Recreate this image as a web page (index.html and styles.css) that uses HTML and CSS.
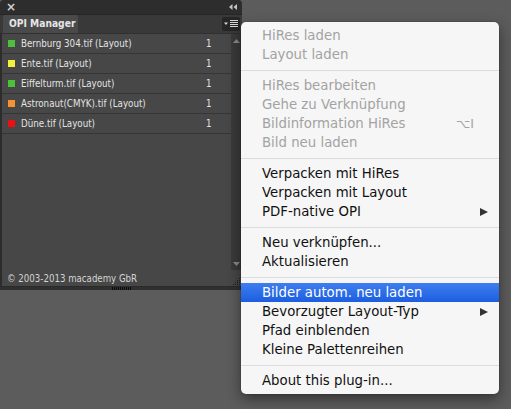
FILE: index.html
```html
<!DOCTYPE html>
<html lang="de">
<head>
<meta charset="utf-8">
<title>OPI Manager</title>
<link rel="stylesheet" href="styles.css">
</head>
<body>
<div class="panel">
  <div class="titlebar">
    <span class="close">×</span>
    <svg class="collapse" width="8" height="6" viewBox="0 0 8 6"><path d="M3.5 0 L0 3 L3.5 6 Z M8 0 L4.5 3 L8 6 Z" fill="#c4c4c4"/></svg>
  </div>
  <div class="tabrow">
    <div class="tab">OPI Manager</div>
    <div class="menubtn">
      <svg width="15" height="8" viewBox="0 0 15 8"><path d="M0 2.5 H4 L2 5 Z" fill="#d8d8d8"/><path d="M6 0.5 H14 M6 2.5 H14 M6 4.5 H14 M6 6.5 H14" stroke="#d8d8d8" stroke-width="1"/></svg>
    </div>
  </div>
  <div class="main">
    <div class="list">
      <div class="row"><span class="sq green"></span><span class="name">Bernburg 304.tif (Layout)</span><span class="count">1</span></div>
      <div class="row"><span class="sq yellow"></span><span class="name">Ente.tif (Layout)</span><span class="count">1</span></div>
      <div class="row"><span class="sq green"></span><span class="name">Eiffelturm.tif (Layout)</span><span class="count">1</span></div>
      <div class="row"><span class="sq orange"></span><span class="name">Astronaut(CMYK).tif (Layout)</span><span class="count">1</span></div>
      <div class="row"><span class="sq red"></span><span class="name">Düne.tif (Layout)</span><span class="count">1</span></div>
    </div>
    <div class="scroll">
      <svg width="7" height="4" viewBox="0 0 7 4"><path d="M3.5 0 L7 4 H0 Z" fill="#8a8a8a"/></svg>
      <svg width="7" height="4" viewBox="0 0 7 4"><path d="M0 0 H7 L3.5 4 Z" fill="#8a8a8a"/></svg>
    </div>
  </div>
  <div class="footer">
    <span>© 2003-2013 macademy GbR</span>
    <svg class="resize" width="10" height="10" viewBox="0 0 10 10"><g fill="#1e1e1e"><rect x="8" y="2" width="1" height="1"/><rect x="6" y="4" width="1" height="1"/><rect x="8" y="4" width="1" height="1"/><rect x="4" y="6" width="1" height="1"/><rect x="6" y="6" width="1" height="1"/><rect x="8" y="6" width="1" height="1"/><rect x="2" y="8" width="1" height="1"/><rect x="4" y="8" width="1" height="1"/><rect x="6" y="8" width="1" height="1"/><rect x="8" y="8" width="1" height="1"/></g></svg>
  </div>
  <div class="bottombar"><span class="grip"></span></div>
</div>

<div class="menu">
  <div class="item disabled">HiRes laden</div>
  <div class="item disabled">Layout laden</div>
  <div class="sep"></div>
  <div class="item disabled">HiRes bearbeiten</div>
  <div class="item disabled">Gehe zu Verknüpfung</div>
  <div class="item disabled"><span class="label">Bildinformation HiRes</span><span class="shortcut">⌥I</span></div>
  <div class="item disabled">Bild neu laden</div>
  <div class="sep"></div>
  <div class="item">Verpacken mit HiRes</div>
  <div class="item">Verpacken mit Layout</div>
  <div class="item"><span class="label">PDF-native OPI</span><span class="arrow"></span></div>
  <div class="sep"></div>
  <div class="item">Neu verknüpfen...</div>
  <div class="item">Aktualisieren</div>
  <div class="sep"></div>
  <div class="item active">Bilder autom. neu laden</div>
  <div class="item"><span class="label">Bevorzugter Layout-Typ</span><span class="arrow"></span></div>
  <div class="item">Pfad einblenden</div>
  <div class="item">Kleine Palettenreihen</div>
  <div class="sep"></div>
  <div class="item">About this plug-in...</div>
</div>
</body>
</html>
```
FILE: styles.css
```css
html, body {
  margin: 0;
  padding: 0;
}
body {
  background: #5c5c5c;
  width: 511px;
  height: 409px;
  overflow: hidden;
  position: relative;
  font-family: "DejaVu Sans Condensed", "DejaVu Sans", sans-serif;
}
.panel {
  width: 242px;
  height: 290px;
  display: flex;
  flex-direction: column;
  background: #474747;
  border-radius: 4px 4px 0 0;
  overflow: hidden;
}
.titlebar {
  height: 14px;
  flex: none;
  background: #2d2d2d;
  display: flex;
  align-items: center;
  justify-content: space-between;
  padding: 0 5px 0 6px;
  border-bottom: 1px solid #262626;
}
.close {
  color: #d0d0d0;
  font-family: "DejaVu Sans", sans-serif;
  font-size: 12px;
  font-weight: bold;
  line-height: 14px;
}
.tabrow {
  height: 18px;
  flex: none;
  background: #393939;
  display: flex;
  align-items: flex-end;
  justify-content: space-between;
  padding-left: 3px;
  padding-right: 2px;
  border-bottom: 1px solid #303030;
}
.tab {
  height: 18px;
  background: #4a4a4a;
  color: #e6e6e6;
  font-weight: bold;
  font-size: 10.2px;
  line-height: 18px;
  padding: 0 3px 0 6px;
  white-space: nowrap;
  border-radius: 2px 2px 0 0;
}
.menubtn {
  width: 18px;
  height: 14px;
  align-self: center;
  background: #262626;
  border-radius: 2px;
  display: flex;
  align-items: center;
  justify-content: center;
}
.main {
  flex: 1;
  display: flex;
  border-left: 2px solid #2c2c2c;
}
.list {
  flex: 1;
}
.row {
  height: 19px;
  border-bottom: 1px solid #353535;
  display: flex;
  align-items: center;
  color: #e4e4e4;
  font-size: 9.7px;
}
.sq {
  width: 7px;
  height: 7px;
  margin-left: 6px;
  margin-right: 6px;
  flex: none;
}
.green { background: #4cc23a; }
.yellow { background: #f4f03c; }
.orange { background: #f6922f; }
.red { background: #ef0f13; }
.name {
  flex: 1;
  white-space: nowrap;
}
.count {
  width: 25px;
  flex: none;
}
.scroll {
  width: 10px;
  margin-right: 1px;
  background: #3a3a3a;
  display: flex;
  flex-direction: column;
  justify-content: space-between;
  align-items: center;
  padding: 5px 0 4px;
}
.footer {
  height: 16px;
  flex: none;
  display: flex;
  align-items: center;
  justify-content: space-between;
  padding-right: 1px;
  color: #d4d4d4;
  font-size: 9.6px;
  border-left: 2px solid #2c2c2c;
  padding-left: 5px;
}
.resize {
  align-self: flex-end;
}
.bottombar {
  height: 3px;
  flex: none;
  background: #303030;
  display: flex;
  justify-content: center;
  border-top: 1px solid #2a2a2a;
}
.grip {
  width: 19px;
  height: 3px;
  background: repeating-linear-gradient(90deg, #0c0c0c 0 1px, transparent 1px 2px);
}

.menu {
  position: absolute;
  left: 241px;
  top: 22px;
  width: 258px;
  padding: 4px 0;
  background: #f6f6f6;
  border-radius: 5px;
  box-shadow: 0 5px 14px rgba(0, 0, 0, 0.45), 0 0 0 1px rgba(0, 0, 0, 0.08);
  font-family: "DejaVu Sans", sans-serif;
  font-size: 13.3px;
  color: #111111;
}
.item {
  height: 19px;
  line-height: 19px;
  padding: 0 11px 0 21px;
  display: flex;
  align-items: center;
  white-space: nowrap;
}
.item.disabled {
  color: #a3a3a3;
}
.item.active {
  background: linear-gradient(#3f7ef0, #1b5ee0);
  color: #ffffff;
}
.label {
  flex: 1;
}
.shortcut {
  margin-right: 14px;
  font-size: 12.5px;
}
.arrow {
  width: 0;
  height: 0;
  border-left: 8px solid #333333;
  border-top: 4.5px solid transparent;
  border-bottom: 4.5px solid transparent;
}
.sep {
  height: 1px;
  margin: 6px 0 5px;
  background: #dcdcdc;
}
```
